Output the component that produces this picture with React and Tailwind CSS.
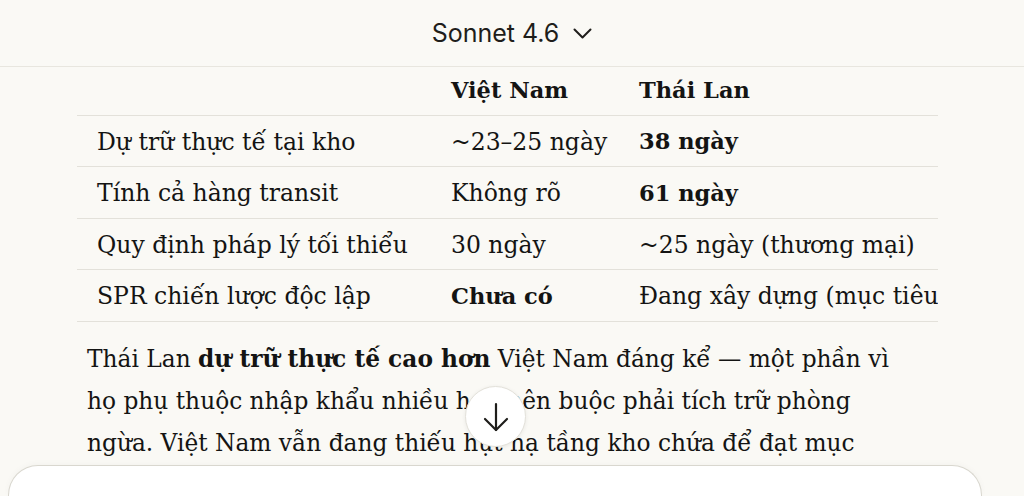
import React from "react";

const rows = [
  { label: "Dự trữ thực tế tại kho", vn: "~23–25 ngày", th: "38 ngày", vnBold: false, thBold: true },
  { label: "Tính cả hàng transit", vn: "Không rõ", th: "61 ngày", vnBold: false, thBold: true },
  { label: "Quy định pháp lý tối thiểu", vn: "30 ngày", th: "~25 ngày (thương mại)", vnBold: false, thBold: false },
  { label: "SPR chiến lược độc lập", vn: "Chưa có", th: "Đang xây dựng (mục tiêu 90 ngày)", vnBold: true, thBold: false },
];

const serif = { fontFamily: '"DejaVu Serif", "Liberation Serif", serif' };

const App = () => {
  return (
    <div className="relative h-[496px] w-[1024px] overflow-hidden bg-[#faf9f5] text-[#141413] flex flex-col">
      {/* Model picker */}
      <header className="h-[67px] shrink-0 border-b border-[#e8e6df] flex items-center justify-center">
        <button className="flex items-center gap-[14px] text-[25px] text-[#1f1e1b] font-['Inter',sans-serif] pt-[1px]">
          <span>Sonnet 4.6</span>
          <svg width="19" height="11" viewBox="0 0 19 11" fill="none" stroke="currentColor" strokeWidth="2" strokeLinecap="round" strokeLinejoin="round">
            <path d="M1.5 1.5 9.5 9.5 17.5 1.5" />
          </svg>
        </button>
      </header>

      {/* Message body */}
      <main className="flex-1 overflow-hidden" style={serif}>
        <div className="ml-[77px] w-[861px] overflow-hidden">
          <table className="w-[1100px] border-collapse text-[23.5px] text-left">
            <thead>
              <tr className="h-[48px] border-b border-[#e3e1da]">
                <th className="w-[354px] pl-[20px]"></th>
                <th className="w-[188px] pl-[20px] font-bold text-[22.5px]">Việt Nam</th>
                <th className="pl-[20px] font-bold text-[22.5px]">Thái Lan</th>
              </tr>
            </thead>
            <tbody>
              {rows.map((row, idx) => (
                <tr key={idx} className="h-[51.5px] border-b border-[#e3e1da]">
                  <td className="pl-[20px] pt-[3px] whitespace-nowrap">{row.label}</td>
                  <td className={`pl-[20px] pt-[3px] whitespace-nowrap ${row.vnBold ? "font-bold text-[22.5px]" : ""}`}>{row.vn}</td>
                  <td className={`pl-[20px] pt-[3px] whitespace-nowrap ${row.thBold ? "font-bold text-[22.5px]" : ""}`}>{row.th}</td>
                </tr>
              ))}
            </tbody>
          </table>
        </div>

        <p className="mt-[16px] pl-[87px] text-[23.3px] leading-[42px] whitespace-nowrap">
          Thái Lan <strong className="font-bold">dự trữ thực tế cao hơn</strong> Việt Nam đáng kể — một phần vì
          <br />
          họ phụ thuộc nhập khẩu nhiều hơn nên buộc phải tích trữ phòng
          <br />
          ngừa. Việt Nam vẫn đang thiếu hụt hạ tầng kho chứa để đạt mục
        </p>
      </main>

      {/* Scroll to bottom */}
      <button className="absolute left-[465px] top-[386px] w-[61px] h-[61px] rounded-full bg-white border border-[#e3e1da] shadow-[0_1px_4px_rgba(0,0,0,0.07)] flex items-center justify-center text-[#1f1e1b]">
        <svg width="26" height="30" viewBox="0 0 26 30" fill="none" stroke="currentColor" strokeWidth="2.2" strokeLinecap="round" strokeLinejoin="round">
          <path d="M13 2v26" />
          <path d="M2 17l11 11 11-11" />
        </svg>
      </button>

      {/* Composer */}
      <div className="shrink-0 h-[31px] ml-[8px] mr-[42px] bg-white border border-b-0 border-[#d9d7cf] rounded-t-[30px] shadow-[0_-1px_6px_rgba(0,0,0,0.03)]"></div>
    </div>
  );
};

export default App;
